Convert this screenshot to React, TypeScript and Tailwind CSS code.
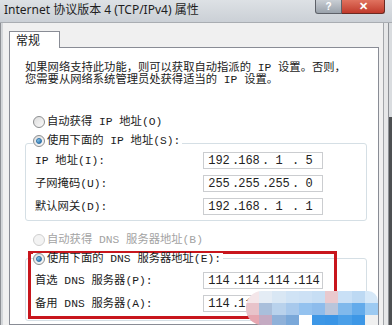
import { Fragment } from "react";

const mono = "font-['Liberation_Mono','Noto_Sans_CJK_SC',monospace]";

function Radio({ checked, disabled }: { checked?: boolean; disabled?: boolean }) {
  return (
    <span
      className={`flex h-[12px] w-[12px] shrink-0 items-center justify-center rounded-full border ${
        disabled
          ? "border-[#cfcfcf] bg-[#f3f3f3]"
          : "border-[#8c8e90] bg-gradient-to-br from-[#dcdcdc] to-[#fafafa]"
      }`}
    >
      {checked && (
        <span className="h-[6px] w-[6px] rounded-full border border-[#2a6fa8] bg-gradient-to-br from-[#9fdcf8] to-[#1f6aa5]" />
      )}
    </span>
  );
}

function RadioRow({
  label,
  checked,
  disabled,
  boxed,
}: {
  label: string;
  checked?: boolean;
  disabled?: boolean;
  boxed?: boolean;
}) {
  return (
    <div className="relative z-10 flex h-[12px] items-center pl-[8px]">
      <div className={`flex items-center gap-[2px] pr-[2px] ${boxed ? "bg-white" : ""}`}>
        <Radio checked={checked} disabled={disabled} />
        <span className={disabled ? "text-[#a3a3a3]" : "text-[#1b1b1b]"}>{label}</span>
      </div>
    </div>
  );
}

function IpBox({ parts }: { parts: string[] }) {
  return (
    <div className="flex h-[17px] w-[120px] items-center border border-[#cbcdd0] bg-white pl-[2px] text-[12px] leading-none text-[#222]">
      {parts.map((p, i) => (
        <Fragment key={i}>
          {i > 0 && <span className="w-[4px] text-center">.</span>}
          <span className="w-[26px] text-center">{p}</span>
        </Fragment>
      ))}
    </div>
  );
}

function Field({ label, parts }: { label: string; parts: string[] }) {
  return (
    <div className="flex h-[17px] items-center">
      <span className="w-[168px] text-[#1b1b1b]">{label}</span>
      <IpBox parts={parts} />
    </div>
  );
}

export default function App() {
  return (
    <div className="relative flex h-[325px] w-[392px] flex-col overflow-hidden bg-[#f0f0f0]">
      {/* title bar */}
      <div className="flex h-[23px] shrink-0 items-start border-b border-[#a9adb2] bg-gradient-to-b from-[#dde1e5] to-[#cbd0d6] pl-[4px]">
        <span className="pt-[3px] font-['Noto_Sans','Noto_Sans_CJK_SC',sans-serif] text-[12px] leading-[14px] text-[#1e1e1e]">
          Internet 协议版本 4 (TCP/IPv4) 属性
        </span>
        <div className="ml-auto mr-[7px] flex">
          <div className="flex h-[14px] w-[27px] items-center justify-center rounded-bl-[3px] border border-t-0 border-[#5d6168] bg-gradient-to-b from-[#c9ced4] to-[#9aa2ab] font-['Liberation_Sans',sans-serif] text-[10px] font-bold leading-none text-white">
            ?
          </div>
          <div className="flex h-[14px] w-[43px] items-center justify-center rounded-br-[3px] border border-l-0 border-t-0 border-[#6b2a22] bg-gradient-to-b from-[#e0725f] to-[#c0392b] font-['Liberation_Sans',sans-serif] text-[11px] font-bold leading-none text-white">
            ✕
          </div>
        </div>
      </div>

      {/* body */}
      <div className="flex min-h-0 flex-1">
        <div className="w-[3px] border-l border-[#8d9095] bg-[#d3d6d9]" />
        <div className="flex min-w-0 flex-1 flex-col bg-[#f0f0f0] pl-[6px] pr-[4px] pt-[8px]">
          <div className="flex">
            <div className="relative z-10 -mb-px flex h-[17px] w-[51px] items-center border border-b-0 border-[#898c95] bg-white pl-[6px] font-['Noto_Sans_CJK_SC',sans-serif] text-[12px] leading-none text-[#1b1b1b]">
              常规
            </div>
          </div>
          <div
            className={`flex flex-1 flex-col border border-[#898c95] bg-white pl-[15px] pr-[11px] pt-[14px] text-[11.3px] leading-[12px] ${mono}`}
          >
            <p className="text-[#1b1b1b]">
              如果网络支持此功能，则可以获取自动指派的 IP 设置。否则，
              <br />
              您需要从网络系统管理员处获得适当的 IP 设置。
            </p>

            <div className="mt-[30px]">
              <RadioRow label="自动获得 IP 地址(O)" />
            </div>
            <div className="mt-[7px]">
              <RadioRow label="使用下面的 IP 地址(S):" checked boxed />
            </div>
            <div className="-mt-[4px] flex flex-col gap-[6px] rounded-[3px] border border-[#d5dfe5] pb-[5px] pl-[9px] pt-[8px]">
              <Field label="IP 地址(I):" parts={["192", "168", "1", "5"]} />
              <Field label="子网掩码(U):" parts={["255", "255", "255", "0"]} />
              <Field label="默认网关(D):" parts={["192", "168", "1", "1"]} />
            </div>

            <div className="mt-[13px]">
              <RadioRow label="自动获得 DNS 服务器地址(B)" disabled />
            </div>
            <div className="mt-[7px]">
              <RadioRow label="使用下面的 DNS 服务器地址(E):" checked boxed />
            </div>
            <div className="-mt-[7px] flex flex-col gap-[6px] rounded-[3px] border border-[#d5dfe5] pb-[8px] pl-[9px] pt-[13px]">
              <Field label="首选 DNS 服务器(P):" parts={["114", "114", "114", "114"]} />
              <Field label="备用 DNS 服务器(A):" parts={["114", "114", "114", "114"]} />
            </div>
          </div>
        </div>
        <div className="w-px bg-[#a3a6aa]" />
        <div className="w-[4px] bg-[#e6e7e8]" />
        <div className="flex w-[4px] flex-col border-l border-[#8e9196]">
          <div className="h-[94px] bg-[#d9dcdf]" />
          <div className="flex-1 bg-[#4e5052]" />
        </div>
      </div>

      {/* red annotation */}
      <div className="absolute left-[28px] top-[251px] h-[68px] w-[309px] border-[3px] border-[#c8161d]" />

      {/* pixelated watermark */}
      <div className="absolute left-[246px] top-[291px] grid h-[34px] w-[132px] grid-cols-10 grid-rows-[12px_12px_10px] overflow-hidden rounded-l-[16px] rounded-tr-[10px]">
        <div className="bg-[#f4e6e9]" />
        <div className="bg-[#e4ecf5]" />
        <div className="bg-[#d9e7f4]" />
        <div className="bg-[#d0e3f5]" />
        <div className="bg-[#cde1f5]" />
        <div className="bg-[#c7def4]" />
        <div className="bg-[#e9c9ce]" />
        <div className="bg-[#c9e0f6]" />
        <div className="bg-[#bdd9f3]" />
        <div className="bg-[#d6e8f8]" />
        <div className="bg-[#e8c3ca]" />
        <div className="bg-[#a9bfdb]" />
        <div className="bg-[#b9d2ec]" />
        <div className="bg-[#a8c9ec]" />
        <div className="bg-[#94c2ef]" />
        <div className="bg-[#8dbcec]" />
        <div className="bg-[#b9c5db]" />
        <div className="bg-[#80b9ec]" />
        <div className="bg-[#63abeb]" />
        <div className="bg-[#9ccaf2]" />
        <div className="bg-[#e6a6b0]" />
        <div className="bg-[#c4aac2]" />
        <div className="bg-[#8fb1d9]" />
        <div className="bg-[#7aa8d9]" />
        <div className="bg-white" />
        <div className="bg-[#3d97e6]" />
        <div className="bg-[#3a95e6]" />
        <div className="bg-[#4a9fe8]" />
        <div className="bg-[#3d97e6]" />
        <div className="bg-[#f0f0f0]" />
      </div>
    </div>
  );
}
